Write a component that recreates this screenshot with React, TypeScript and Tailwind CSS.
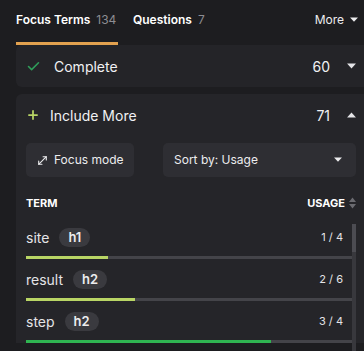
import { Check, Plus, MoveDiagonal } from "lucide-react"

type Term = { name: string; tag: string; used: number; total: number }

const terms: Term[] = [
  { name: "site", tag: "h1", used: 1, total: 4 },
  { name: "result", tag: "h2", used: 2, total: 6 },
  { name: "step", tag: "h2", used: 3, total: 4 },
]

function Caret({ up, w = 9 }: { up?: boolean; w?: number }) {
  return (
    <svg width={w} height={w * 0.66} viewBox="0 0 9 6" className={up ? "rotate-180" : ""}>
      <path d="M0 0.5h9L4.5 5.5z" fill="currentColor" />
    </svg>
  )
}

function TermRow({ term }: { term: Term }) {
  const ratio = term.used / term.total
  const done = ratio >= 0.75
  return (
    <div className="pt-[9px] pr-[4px]">
      <div className="flex h-[21px] items-center justify-between">
        <div className="flex items-center gap-[10px]">
          <span className="text-[14px] text-[#e4e4e7]">{term.name}</span>
          <span className="flex h-[19px] items-center rounded-full bg-[#3a3a3f] px-[9px] text-[13px] font-semibold text-[#ececee]">
            {term.tag}
          </span>
        </div>
        <span className="pr-[9px] text-[11px] text-[#e4e4e7]">
          {term.used} / {term.total}
        </span>
      </div>
      <div className="mb-[1px] mt-[8px] h-[3px] w-full bg-[#444449]">
        <div
          className={done ? "h-full bg-[#2fb451]" : "h-full bg-[#b9d565]"}
          style={{ width: `${ratio * 100}%` }}
        />
      </div>
    </div>
  )
}

export default function App() {
  return (
    <div
      className="h-[351px] w-[364px] overflow-hidden bg-[#1d1d20] text-white"
      style={{ fontFamily: "Inter, 'Liberation Sans', sans-serif" }}
    >
      {/* Tabs */}
      <div className="flex h-[45px] items-stretch pl-[16px] pr-[6px]">
        <div className="flex flex-col justify-between">
          <div className="flex items-center gap-[6px] pt-[11px] text-[12px]">
            <span className="font-semibold">Focus Terms</span>
            <span className="text-[#8c8c92]">134</span>
          </div>
          <div className="h-[3px] w-[102px] bg-[#e2a14f]" />
        </div>
        <div className="ml-[15px] flex items-center gap-[6px] pb-[6px] text-[12px]">
          <span className="font-semibold">Questions</span>
          <span className="text-[#8c8c92]">7</span>
        </div>
        <div className="ml-auto flex items-center gap-[6px] pb-[6px] text-[12px] text-[#ececee]">
          More
          <Caret w={8} />
        </div>
      </div>

      {/* Complete */}
      <div className="ml-[16px] flex h-[42px] items-center rounded-l-[6px] bg-[#242428] pl-[10px] pr-[8px]">
        <Check size={15} strokeWidth={2.5} className="text-[#2f9e5a]" />
        <span className="ml-[13px] text-[14px] text-[#f1f1f3]">Complete</span>
        <span className="ml-auto text-[14px] text-[#f1f1f3]">60</span>
        <span className="ml-[17px] text-[#e4e4e7]">
          <Caret />
        </span>
      </div>

      {/* Include More */}
      <div className="ml-[16px] mt-[7px] rounded-tl-[6px] bg-[#252529] pl-[10px] pr-[8px]">
        <div className="flex h-[42px] items-center">
          <Plus size={14} strokeWidth={3} className="text-[#b9d565]" />
          <span className="ml-[10px] text-[14px] text-[#f1f1f3]">Include More</span>
          <span className="ml-auto text-[14px] text-[#f1f1f3]">71</span>
          <span className="ml-[17px] text-[#e4e4e7]">
            <Caret up />
          </span>
        </div>

        <div className="mt-[7px] flex gap-[29px]">
          <button className="flex h-[34px] w-[108px] items-center gap-[5px] rounded-[5px] bg-[#2e2e33] pl-[10px] text-[12px] text-[#ececee]">
            <MoveDiagonal size={13} strokeWidth={2} />
            Focus mode
          </button>
          <button className="flex h-[34px] flex-1 items-center justify-between rounded-[5px] bg-[#2e2e33] pl-[11px] pr-[14px] text-[12px] text-[#ececee]">
            Sort by: Usage
            <Caret w={8} />
          </button>
        </div>

        {/* Table */}
        <div className="mt-[16px]">
          <div className="flex h-[20px] items-center justify-between text-[11px] font-bold text-white">
            <span>TERM</span>
            <div className="flex items-center gap-[4px]">
              <span>USAGE</span>
              <svg width="7" height="12" viewBox="0 0 7 12" className="text-[#6b6b70]">
                <path d="M0 5h7L3.5 0.5z M0 7h7L3.5 11.5z" fill="currentColor" />
              </svg>
            </div>
          </div>
          <div className="relative mt-[5px]">
            {terms.map((t) => (
              <TermRow key={t.name} term={t} />
            ))}
            <div className="absolute right-0 top-[6px] h-[140px] w-[4px] bg-[#38383d]">
              <div className="h-[28px] w-full bg-[#4c4c52]" />
            </div>
          </div>
        </div>
      </div>
    </div>
  )
}
